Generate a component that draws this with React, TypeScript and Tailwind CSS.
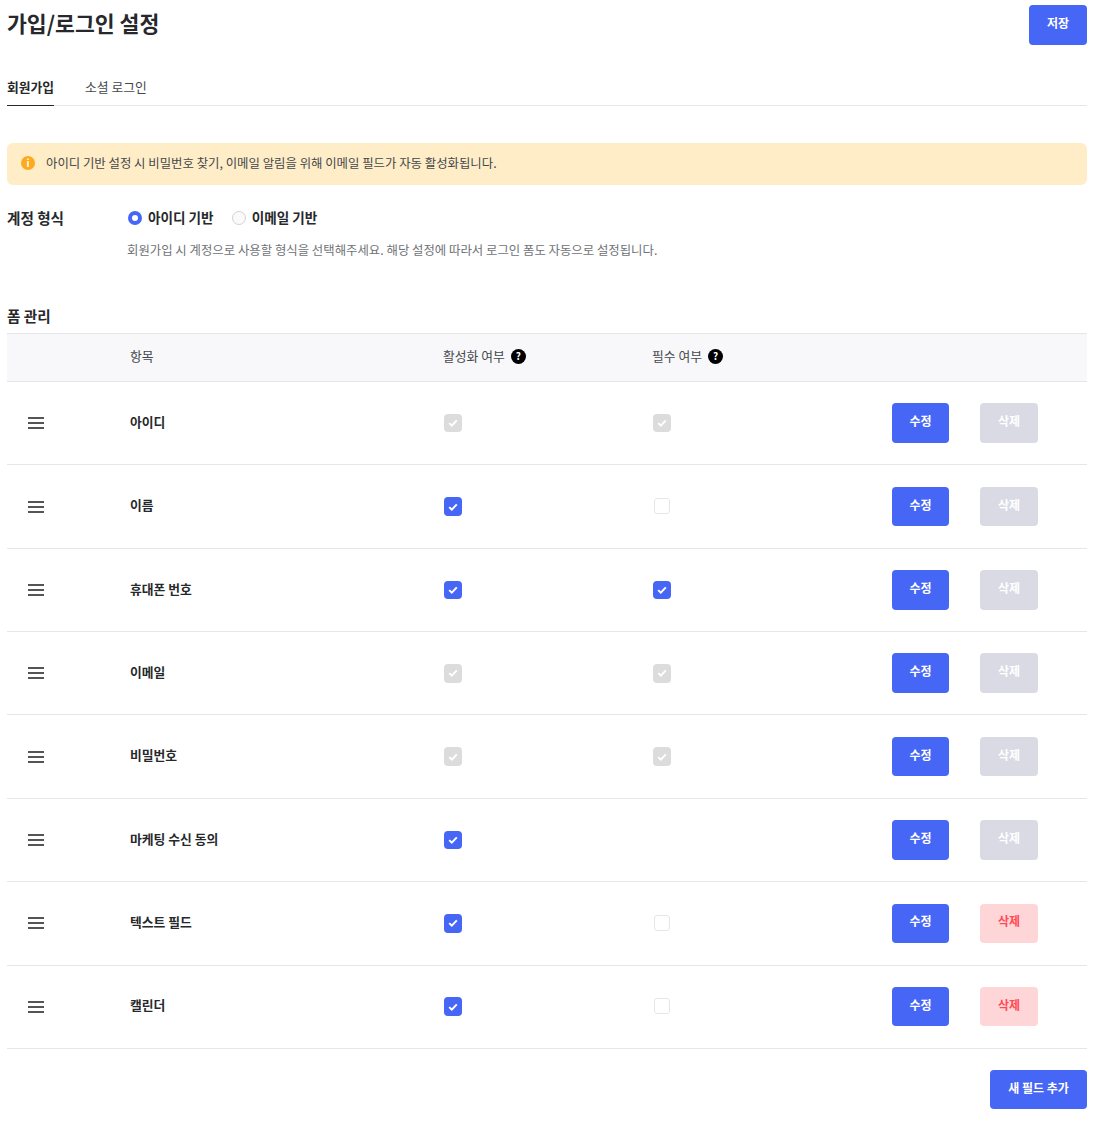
type Check = "locked" | "on" | "off" | "none";

type Field = { name: string; active: Check; required: Check; removable?: boolean };

const fields: Field[] = [
  { name: "아이디", active: "locked", required: "locked" },
  { name: "이름", active: "on", required: "off" },
  { name: "휴대폰 번호", active: "on", required: "on" },
  { name: "이메일", active: "locked", required: "locked" },
  { name: "비밀번호", active: "locked", required: "locked" },
  { name: "마케팅 수신 동의", active: "on", required: "none" },
  { name: "텍스트 필드", active: "on", required: "off", removable: true },
  { name: "캘린더", active: "on", required: "off", removable: true },
];

function CheckMark() {
  return (
    <svg width="10" height="8" viewBox="0 0 10 8" fill="none">
      <path d="M1.2 4.1 3.8 6.6 8.8 1.4" stroke="#fff" strokeWidth="2" />
    </svg>
  );
}

function CheckBox({ state }: { state: Check }) {
  if (state === "none") return null;
  if (state === "off") {
    return <span className="-mt-px ml-px block h-4 w-4 rounded-[3px] border-[1.5px] border-[#e6e6ea] bg-white" />;
  }
  return (
    <span
      className={
        state === "on"
          ? "flex h-[18.5px] w-[18px] items-center justify-center rounded-[4px] bg-[#4666f6]"
          : "flex h-[18.5px] w-[18px] items-center justify-center rounded-[4px] bg-[#dcdcdc]"
      }
    >
      <CheckMark />
    </span>
  );
}

function Help() {
  return (
    <span className="flex h-[15px] w-[15px] items-center justify-center rounded-full bg-black text-[10px] font-bold leading-none text-white">
      ?
    </span>
  );
}

function DragHandle() {
  return (
    <svg width="16" height="12" viewBox="0 0 16 12" fill="#555">
      <rect x="0" y="0" width="16" height="2" />
      <rect x="0" y="5" width="16" height="2" />
      <rect x="0" y="10" width="16" height="2" />
    </svg>
  );
}

function Row({ field }: { field: Field }) {
  return (
    <div className="grid h-[83.36px] grid-cols-[122px_314px_209px_240px_88px_1fr] items-center border-b border-[#e6e6e8]">
      <div className="pl-[21px]">
        <DragHandle />
      </div>
      <div className="pb-[2px] pl-px text-[12.8px] font-bold leading-none text-[#26282b]">{field.name}</div>
      <div className="pl-px">
        <CheckBox state={field.active} />
      </div>
      <div className="pl-px">
        <CheckBox state={field.required} />
      </div>
      <button className="h-[39.6px] w-[57px] rounded-[4px] bg-[#4666f6] pb-1 text-xs font-bold text-white">수정</button>
      <button
        className={
          field.removable
            ? "h-[39.6px] w-[58px] rounded-[4px] bg-[#ffd6d8] pb-1 text-xs font-bold text-[#ff4a55]"
            : "h-[39.6px] w-[58px] rounded-[4px] bg-[#dadae4] pb-1 text-xs font-bold text-white"
        }
      >
        삭제
      </button>
    </div>
  );
}

export default function App() {
  return (
    <div className="min-h-[1121px] bg-white pl-[7px] pr-3 pt-[5px] font-['Noto_Sans_CJK_KR','Noto_Sans',sans-serif] text-[#26282b]">
      <header className="flex h-10 items-start justify-between">
        <h1 className="mt-px text-[21.6px] font-bold leading-[34px]">가입/로그인 설정</h1>
        <button className="h-10 w-[58px] rounded-[4px] bg-[#4666f6] pb-1 text-xs font-bold text-white">저장</button>
      </header>

      <nav className="mt-[24px] flex h-[37px] gap-[31px] border-b border-[#e6e6e8] text-[12.8px]">
        <div className="h-[37px] border-b border-[#26282b] pt-[9px] font-bold leading-[18px]">회원가입</div>
        <div className="pt-[9px] leading-[18px] text-[#44474b]">소셜 로그인</div>
      </nav>

      <div className="mt-[37px] flex h-[42px] items-center gap-[11px] rounded-[6px] bg-[#ffedc8] pb-[2px] pl-[14px] text-[12.4px] text-[#44474b]">
        <span className="flex h-[14px] w-[14px] items-center justify-center rounded-full bg-[#fdaa1f] text-[10px] font-bold leading-none text-white">
          i
        </span>
        아이디 기반 설정 시 비밀번호 찾기, 이메일 알림을 위해 이메일 필드가 자동 활성화됩니다.
      </div>

      <section className="mt-[22px] flex">
        <div className="w-[120px] text-[14.6px] font-bold leading-[22px]">계정 형식</div>
        <div>
          <div className="flex h-[22px] items-center pb-px text-[13.6px] font-bold">
            <span className="ml-px h-[14px] w-[14px] rounded-full border-[4px] border-[#4666f6] bg-white" />
            <span className="ml-[6px]">아이디 기반</span>
            <span className="ml-[18px] h-[14px] w-[14px] rounded-full border border-[#d3d3d8] bg-[#fafafa]" />
            <span className="ml-[6px]">이메일 기반</span>
          </div>
          <p className="mt-[12px] text-[12.4px] leading-[18px] text-[#6f7277]">
            회원가입 시 계정으로 사용할 형식을 선택해주세요. 해당 설정에 따라서 로그인 폼도 자동으로 설정됩니다.
          </p>
        </div>
      </section>

      <h2 className="mt-[46px] text-[14.6px] font-bold leading-[22px]">폼 관리</h2>

      <div className="mt-[6px] grid h-[49px] grid-cols-[122px_314px_209px_1fr] items-center border-y border-[#e6e6e8] bg-[#f8f8fa] pb-[3px] text-[12.8px] text-[#44474b]">
        <div />
        <div className="pl-px">항목</div>
        <div className="flex items-center gap-[6px]">
          활성화 여부 <Help />
        </div>
        <div className="flex items-center gap-[6px]">
          필수 여부 <Help />
        </div>
      </div>

      {fields.map((field) => (
        <Row key={field.name} field={field} />
      ))}

      <div className="mt-[21px] flex justify-end">
        <button className="h-[39.6px] w-[97px] rounded-[4px] bg-[#4666f6] pb-1 text-xs font-bold text-white">새 필드 추가</button>
      </div>
    </div>
  );
}
